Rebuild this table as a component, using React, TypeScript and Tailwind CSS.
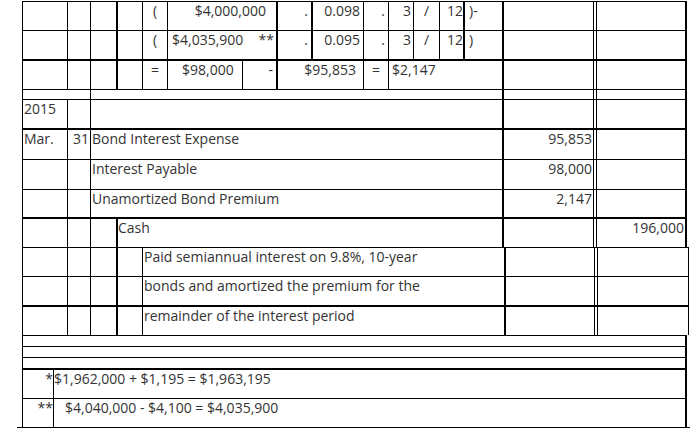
import React from "react";

type P = { className?: string; children?: React.ReactNode };

const tops = {
  thin: "border-t border-black",
  thick: "border-t-2 border-black",
};

function Row({
  top = "thin",
  className = "",
  children,
}: P & { top?: "thin" | "thick" }) {
  return <div className={`flex ${tops[top]} ${className}`}>{children}</div>;
}

function Cell({ className = "", children }: P) {
  return <div className={`shrink-0 whitespace-nowrap border-black ${className}`}>{children}</div>;
}

// debit / credit columns with the double rule between them
function Money({ debit, credit }: { debit?: string; credit?: string }) {
  return (
    <>
      <Cell className="w-[92px] border-l-2 border-r text-right pr-[1px]">{debit}</Cell>
      <Cell className="w-[2px]" />
      <Cell className="w-[91px] border-l border-r-2 text-right pr-[1px]">{credit}</Cell>
    </>
  );
}

function MoneyWide() {
  return (
    <>
      <Cell className="w-[91px] border-l-2 border-r" />
      <Cell className="w-[2px]" />
      <Cell className="w-[92px] border-l border-r" />
    </>
  );
}

function LeftCols() {
  return (
    <>
      <Cell className="w-[45px] border-l" />
      <Cell className="w-[23px] border-l" />
      <Cell className="w-[26px] border-l" />
      <Cell className="w-[26px] border-l-2" />
    </>
  );
}

export default function App() {
  return (
    <div className="w-[697px] h-[435px] bg-white pt-px pl-[22px] text-[14px] leading-[17px] text-[#333] font-['Open_Sans','Liberation_Sans',sans-serif]">
      <div className="w-[665px]">
        {/* calculation rows */}
        <Row className="h-[29px]">
          <LeftCols />
          <Cell className="w-[25px] border-l text-center">(</Cell>
          <Cell className="w-[109px] border-l text-right pr-[10px]">$4,000,000</Cell>
          <Cell className="w-[35px] border-l-2 text-right pr-[3px]">.</Cell>
          <Cell className="w-[52px] border-l-2 text-right pr-[3px]">0.098</Cell>
          <Cell className="w-[25px] border-l text-right pr-[3px]">.</Cell>
          <Cell className="w-[25px] border-l text-right pr-[2px]">3</Cell>
          <Cell className="w-[26px] border-l text-center">/</Cell>
          <Cell className="w-[24px] border-l text-right">12</Cell>
          <Cell className="w-[39px] border-l-2 pl-[4px]">)-</Cell>
          <Money />
        </Row>
        <Row className="h-[29px]">
          <LeftCols />
          <Cell className="w-[25px] border-l text-center">(</Cell>
          <Cell className="w-[109px] border-l flex justify-between pl-[4px] pr-[2px]">
            <span>$4,035,900</span>
            <span>**</span>
          </Cell>
          <Cell className="w-[35px] border-l-2 text-right pr-[3px]">.</Cell>
          <Cell className="w-[52px] border-l-2 text-right pr-[3px]">0.095</Cell>
          <Cell className="w-[25px] border-l text-right pr-[3px]">.</Cell>
          <Cell className="w-[25px] border-l text-right pr-[2px]">3</Cell>
          <Cell className="w-[26px] border-l text-center">/</Cell>
          <Cell className="w-[24px] border-l text-right">12</Cell>
          <Cell className="w-[39px] border-l-2 pl-[4px]">)</Cell>
          <Money />
        </Row>
        <Row top="thick" className="h-[30px]">
          <LeftCols />
          <Cell className="w-[25px] border-l text-center">=</Cell>
          <Cell className="w-[75px] border-l pl-[14px]">$98,000</Cell>
          <Cell className="w-[34px] border-l text-right pr-[3px]">-</Cell>
          <Cell className="w-[87px] border-l-2 text-right pr-[7px]">$95,853</Cell>
          <Cell className="w-[25px] border-l text-center">=</Cell>
          <Cell className="w-[114px] border-l pl-[3px]">$2,147</Cell>
          <Money />
        </Row>
        <Row className="h-[10px]">
          <Cell className="w-[68px] border-l" />
          <Cell className="w-[412px] border-l" />
          <Money />
        </Row>

        {/* journal entry */}
        <Row className="h-[29px]">
          <Cell className="w-[45px] border-l pl-px">2015</Cell>
          <Cell className="w-[23px] border-l" />
          <Cell className="w-[412px] border-l" />
          <Money />
        </Row>
        <Row top="thick" className="h-[31px]">
          <Cell className="w-[45px] border-l pl-px">Mar.</Cell>
          <Cell className="w-[23px] border-l text-right pr-px">31</Cell>
          <Cell className="w-[412px] border-l pl-px">Bond Interest Expense</Cell>
          <Money debit="95,853" />
        </Row>
        <Row className="h-[30px]">
          <Cell className="w-[45px] border-l" />
          <Cell className="w-[23px] border-l" />
          <Cell className="w-[412px] border-l pl-px">Interest Payable</Cell>
          <Money debit="98,000" />
        </Row>
        <Row className="h-[28px]">
          <Cell className="w-[45px] border-l" />
          <Cell className="w-[23px] border-l" />
          <Cell className="w-[412px] border-l pl-px">Unamortized Bond Premium</Cell>
          <Money debit="2,147" />
        </Row>
        <Row top="thick" className="h-[30px]">
          <Cell className="w-[45px] border-l" />
          <Cell className="w-[23px] border-l" />
          <Cell className="w-[26px] border-l" />
          <Cell className="w-[386px] border-l-2">Cash</Cell>
          <Money credit="196,000" />
        </Row>
        <Row className="h-[29px] w-[667px]">
          <LeftCols />
          <Cell className="w-[362px] border-l pl-px">Paid semiannual interest on 9.8%, 10-year</Cell>
          <MoneyWide />
        </Row>
        <Row className="h-[29px] w-[667px]">
          <LeftCols />
          <Cell className="w-[362px] border-l pl-px">bonds and amortized the premium for the</Cell>
          <MoneyWide />
        </Row>
        <Row top="thick" className="h-[30px] w-[667px]">
          <LeftCols />
          <Cell className="w-[362px] border-l pl-px">remainder of the interest period</Cell>
          <MoneyWide />
        </Row>

        {/* footnotes */}
        <Row className="h-[11px]">
          <Cell className="w-[665px] border-l border-r-2" />
        </Row>
        <Row className="h-[11px]">
          <Cell className="w-[665px] border-l border-r-2" />
        </Row>
        <Row className="h-[11px]">
          <Cell className="w-[665px] border-l border-r-2" />
        </Row>
        <Row top="thick" className="h-[30px]">
          <Cell className="w-[31px] border-l text-right">*</Cell>
          <Cell className="w-[634px] border-l border-r-2">$1,962,000 + $1,195 = $1,963,195</Cell>
        </Row>
        <Row className="h-[29px]">
          <Cell className="w-[31px] border-l text-right">**</Cell>
          <Cell className="w-[634px] border-l border-r-2 pl-[11px]">$4,040,000 - $4,100 = $4,035,900</Cell>
        </Row>
        <div className="h-px w-[673px] -ml-[5px] bg-black" />
      </div>
    </div>
  );
}
